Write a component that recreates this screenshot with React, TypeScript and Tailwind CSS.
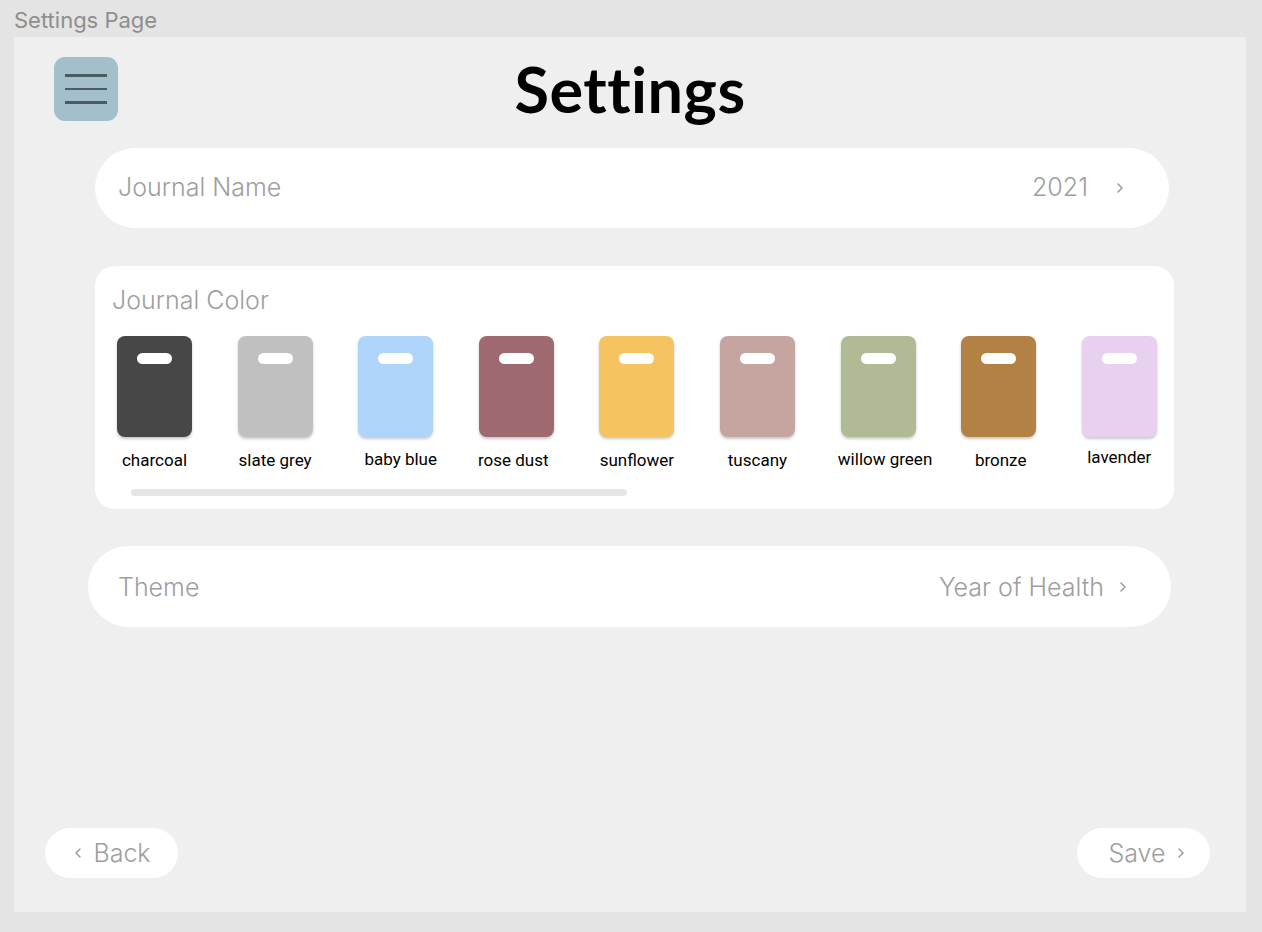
import React from "react";

const swatches = [
  { name: "charcoal", color: "bg-[#474747]", off: "" },
  { name: "slate grey", color: "bg-[#c0c0c0]", off: "" },
  { name: "baby blue", color: "bg-[#aed4fa]", off: "translate-x-[5px] -translate-y-[1px]" },
  { name: "rose dust", color: "bg-[#9e696f]", off: "-translate-x-[3px]" },
  { name: "sunflower", color: "bg-[#f5c35f]", off: "" },
  { name: "tuscany", color: "bg-[#c5a5a0]", off: "" },
  { name: "willow green", color: "bg-[#b0bb95]", off: "translate-x-[7px] -translate-y-[1px]" },
  { name: "bronze", color: "bg-[#b38143]", off: "translate-x-[2px]" },
  { name: "lavender", color: "bg-[#e8d0f0]", off: "-translate-y-[3px]" },
];

function Chevron({ dir = "right", className = "" }: { dir?: "left" | "right"; className?: string }) {
  return (
    <svg width="8" height="12" viewBox="0 0 8 12" className={className}>
      {dir === "right" ? (
        <polyline points="2,2 6,6 2,10" fill="none" stroke="#9a9a9a" strokeWidth="1.5" strokeLinecap="round" strokeLinejoin="round" />
      ) : (
        <polyline points="6,2 2,6 6,10" fill="none" stroke="#9a9a9a" strokeWidth="1.5" strokeLinecap="round" strokeLinejoin="round" />
      )}
    </svg>
  );
}

export default function App() {
  return (
    <div className="w-[1262px] h-[932px] bg-[#e4e4e4] pl-[14px] pr-[16px] pb-[20px] flex flex-col font-['Inter',sans-serif]">
      <div className="h-[37px] flex items-center pt-[3px] text-[22px] text-[#8e8e8e] leading-none">
        Settings Page
      </div>
      <div className="flex-1 bg-[#efefef] flex flex-col pt-[20px] pb-[34px]">
        {/* Header */}
        <div className="grid grid-cols-[64px_1fr_64px] px-[40px] items-center">
          <div className="w-[64px] h-[64px] rounded-[11px] bg-[#a3bfcb] flex flex-col items-center justify-center gap-[11px]">
            <div className="w-[42px] h-[2.5px] bg-[#4a5b61]" />
            <div className="w-[42px] h-[2.5px] bg-[#4a5b61]" />
            <div className="w-[42px] h-[2.5px] bg-[#4a5b61]" />
          </div>
          <div className="text-center font-['Lato',sans-serif] font-bold text-[63px] leading-none text-black -mt-[2px] tracking-[0.5px] [font-variant-ligatures:none]">
            Settings
          </div>
          <div />
        </div>

        {/* Journal Name */}
        <div className="mt-[27px] ml-[81px] w-[1074px] h-[80px] bg-white rounded-full flex items-center pl-[23px] pr-[45px]">
          <span className="text-[25px] font-light text-[#9e9e9e] leading-[32px] -mt-[2px]">Journal Name</span>
          <span className="ml-auto text-[25px] font-light text-[#9e9e9e] leading-[32px] -mt-[2px]">2021</span>
          <Chevron className="ml-[28px]" />
        </div>

        {/* Journal Color */}
        <div className="mt-[38px] ml-[81px] w-[1079px] h-[243px] bg-white rounded-[20px] pt-[18px] pl-[17px]">
          <div className="text-[25px] font-light text-[#9e9e9e] leading-[32px]">Journal Color</div>
          <div className="flex gap-[45.6px] mt-[20px] pl-[5px]">
            {swatches.map((s) => (
              <div key={s.name} className="w-[75px] flex flex-col items-center">
                <div className={`w-[75px] h-[101px] rounded-[8px] ${s.color} shadow-[0_2px_3px_rgba(0,0,0,0.22)] flex justify-center pt-[17px]`}>
                  <div className="w-[35px] h-[11px] rounded-full bg-white" />
                </div>
                <div className={`mt-[13px] whitespace-nowrap font-['Roboto',sans-serif] text-[17px] leading-[20px] text-black ${s.off}`}>
                  {s.name}
                </div>
              </div>
            ))}
          </div>
          <div className="mt-[19px] ml-[19px] w-[496px] h-[7px] rounded-full bg-[#e6e6e6]" />
        </div>

        {/* Theme */}
        <div className="mt-[37px] ml-[74px] w-[1083px] h-[81px] bg-white rounded-full flex items-center pl-[30px] pr-[44px]">
          <span className="text-[25px] font-light text-[#9e9e9e] leading-[32px]">Theme</span>
          <span className="ml-auto text-[25px] font-light text-[#9e9e9e] leading-[32px]">Year of Health</span>
          <Chevron className="ml-[15px]" />
        </div>

        {/* Buttons */}
        <div className="mt-auto flex justify-between pl-[31px] pr-[36px]">
          <div className="w-[133px] h-[50px] bg-white rounded-full flex items-center justify-center gap-[11px] pl-[2px]">
            <Chevron dir="left" />
            <span className="text-[25px] font-light text-[#9e9e9e] leading-none">Back</span>
          </div>
          <div className="w-[133px] h-[50px] bg-white rounded-full flex items-center justify-center gap-[11px] pl-[6px]">
            <span className="text-[25px] font-light text-[#9e9e9e] leading-none">Save</span>
            <Chevron />
          </div>
        </div>
      </div>
    </div>
  );
}
